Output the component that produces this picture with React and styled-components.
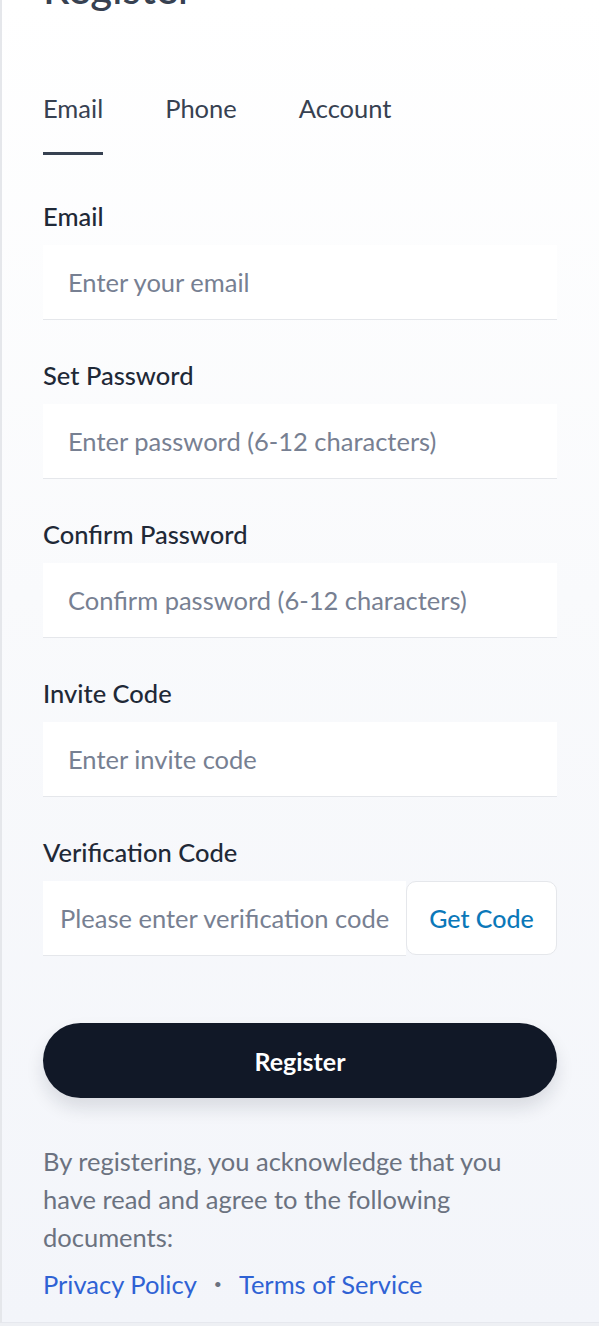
import React, { useState } from "react";
import styled, { createGlobalStyle } from "styled-components";

const GlobalStyle = createGlobalStyle`
  * { box-sizing: border-box; }
  body {
    margin: 0;
    background: #eef0f4;
    font-family: Lato, "Noto Sans", sans-serif;
  }
`;

const Page = styled.div`
  height: 1323px;
  overflow: hidden;
  border-left: 2px solid #e5e7eb;
  border-bottom: 1px solid #e6e8ee;
  background: linear-gradient(180deg, #ffffff 0%, #f9fafc 45%, #f3f5fa 100%);
  padding: 0 42px 0 41px;
`;

const Title = styled.h1`
  margin: -36px 0 0;
  font-size: 42px;
  line-height: 48px;
  font-weight: 500;
  color: #374151;
`;

const Tabs = styled.div`
  display: flex;
  gap: 62px;
  margin-top: 81px;
`;

const Tab = styled.button`
  border: 0;
  background: none;
  padding: 0 0 29px;
  font-family: inherit;
  font-size: 25.5px;
  line-height: 30px;
  color: #374151;
  border-bottom: 3px solid ${(p) => (p.$active ? "#374151" : "transparent")};
  cursor: pointer;
`;

const Form = styled.form`
  display: flex;
  flex-direction: column;
  margin-top: 46px;
`;

const Field = styled.div`
  display: flex;
  flex-direction: column;
  gap: 14px;
  margin-bottom: 40px;
`;

const Label = styled.label`
  font-size: 25.5px;
  line-height: 30px;
  font-weight: 500;
  color: #1f2937;
`;

const Input = styled.input`
  height: 75px;
  width: 100%;
  border: 0;
  border-bottom: 1px solid #e5e7eb;
  background: #ffffff;
  padding: 0 0 0 ${(p) => p.$pad || 25}px;
  font-family: inherit;
  font-size: 25.5px;
  color: #1f2937;
  outline: none;
  &::placeholder {
    color: #778092;
  }
`;

const CodeRow = styled.div`
  display: flex;
  align-items: stretch;
`;

const CodeButton = styled.button`
  flex: 0 0 151px;
  height: 74px;
  border: 1px solid #e5e7eb;
  border-radius: 10px;
  background: #ffffff;
  font-family: inherit;
  font-size: 25px;
  font-weight: 500;
  color: #0b78b9;
  cursor: pointer;
`;

const Submit = styled.button`
  height: 75px;
  margin-top: 27px;
  border: 0;
  border-radius: 38px;
  background: #111827;
  color: #ffffff;
  font-family: inherit;
  font-size: 25px;
  font-weight: 700;
  box-shadow: 0 10px 18px rgba(17, 24, 39, 0.12);
  cursor: pointer;
`;

const Note = styled.p`
  margin: 44px 0 0;
  max-width: 490px;
  font-size: 25.5px;
  line-height: 38px;
  color: #6b7280;
`;

const Links = styled.div`
  display: flex;
  align-items: center;
  gap: 17px;
  margin-top: 9px;
  font-size: 25.5px;
  line-height: 38px;
`;

const DocLink = styled.a`
  color: #2f62d4;
  text-decoration: none;
`;

const Dot = styled.span`
  color: #6b7280;
  font-size: 14px;
`;

const fields = [
  { label: "Email", placeholder: "Enter your email", type: "email" },
  { label: "Set Password", placeholder: "Enter password (6-12 characters)", type: "password" },
  { label: "Confirm Password", placeholder: "Confirm password (6-12 characters)", type: "password" },
  { label: "Invite Code", placeholder: "Enter invite code", type: "text" },
];

export default function App() {
  const [tab, setTab] = useState("Email");

  return (
    <>
      <GlobalStyle />
      <Page>
        <Title>Register</Title>
        <Tabs>
          {["Email", "Phone", "Account"].map((t) => (
            <Tab key={t} type="button" $active={tab === t} onClick={() => setTab(t)}>
              {t}
            </Tab>
          ))}
        </Tabs>
        <Form onSubmit={(e) => e.preventDefault()}>
          {fields.map((f) => (
            <Field key={f.label}>
              <Label>{f.label}</Label>
              <Input type={f.type} placeholder={f.placeholder} />
            </Field>
          ))}
          <Field>
            <Label>Verification Code</Label>
            <CodeRow>
              <Input $pad={17} placeholder="Please enter verification code" />
              <CodeButton type="button">Get Code</CodeButton>
            </CodeRow>
          </Field>
          <Submit type="submit">Register</Submit>
        </Form>
        <Note>
          By registering, you acknowledge that you have read and agree to the
          following documents:
        </Note>
        <Links>
          <DocLink href="#">Privacy Policy</DocLink>
          <Dot>•</Dot>
          <DocLink href="#">Terms of Service</DocLink>
        </Links>
      </Page>
    </>
  );
}
